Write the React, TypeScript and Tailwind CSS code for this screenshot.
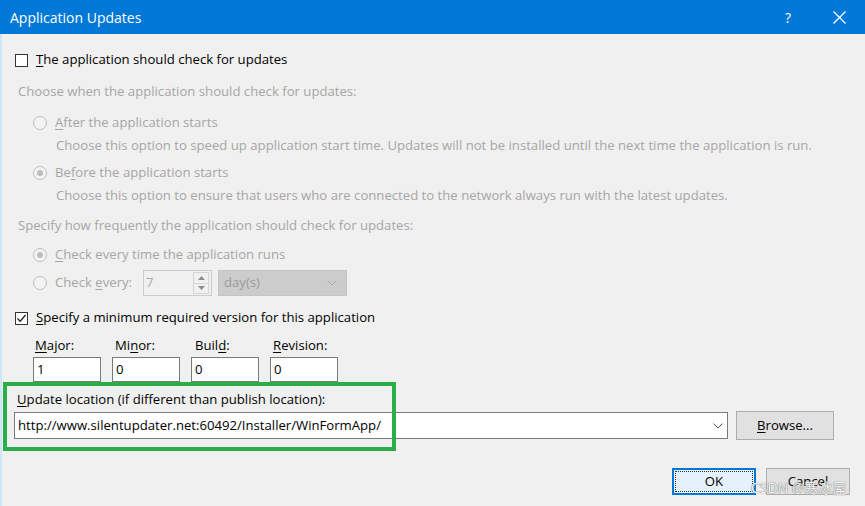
import React from "react";

const F = { fontFamily: '"Open Sans", "Noto Sans", "Noto Sans CJK SC", sans-serif' };

function Check({ checked }: { checked?: boolean }) {
  return (
    <div className="w-[13px] h-[13px] border border-[#333333] bg-white flex items-center justify-center shrink-0">
      {checked && (
        <svg width="11" height="11" viewBox="0 0 11 11">
          <path d="M1.5 5.5 L4.2 8.2 L9.5 2" fill="none" stroke="#222" strokeWidth="1.3" />
        </svg>
      )}
    </div>
  );
}

function Radio({ checked }: { checked?: boolean }) {
  return (
    <div className="w-[14px] h-[14px] rounded-full border border-[#bcbcbc] bg-[#f4f4f4] flex items-center justify-center shrink-0">
      {checked && <div className="w-[6px] h-[6px] rounded-full bg-[#bcbcbc]" />}
    </div>
  );
}

function U({ children }: { children: React.ReactNode }) {
  return <span className="underline underline-offset-2">{children}</span>;
}

export default function App() {
  return (
    <div className="w-[865px] h-[506px] overflow-hidden relative bg-[#f0f0f0] text-[13.15px] text-black" style={F}>
      {/* title bar */}
      <div className="h-[34px] bg-[#0078d7] flex items-center text-white">
        <div className="pl-[10px] text-[14px] flex-1">Application Updates</div>
        <div className="w-[30px] text-center text-[14px] mr-[21px]">?</div>
        <div className="w-[30px] flex justify-center mr-[11px]">
          <svg width="13" height="13" viewBox="0 0 13 13">
            <path d="M0.5 0.5 L12.5 12.5 M12.5 0.5 L0.5 12.5" stroke="white" strokeWidth="1.3" />
          </svg>
        </div>
      </div>

      <div className="flex h-[472px]">
        <div className="w-[2px] bg-[#cfe6fa]" />
        <div className="flex-1 flex flex-col pt-[16px] pl-[13px]">
          <div className="h-[20px] flex items-center gap-[8px]">
            <Check />
            <span><U>T</U>he application should check for updates</span>
          </div>
          <div className="h-[20px] mt-[12px] flex items-center pl-[3px] text-[#a6a6a6]">
            Choose when the application should check for updates:
          </div>
          <div className="h-[20px] mt-[11px] flex items-center gap-[8px] pl-[18px] text-[#a6a6a6]">
            <Radio />
            <span><U>A</U>fter the application starts</span>
          </div>
          <div className="h-[20px] mt-[3px] flex items-center pl-[41px] text-[#a6a6a6]">
            Choose this option to speed up application start time. Updates will not be installed until the next time the application is run.
          </div>
          <div className="h-[20px] mt-[7px] flex items-center gap-[8px] pl-[18px] text-[#a6a6a6]">
            <Radio checked />
            <span>Be<U>f</U>ore the application starts</span>
          </div>
          <div className="h-[20px] mt-[3px] flex items-center pl-[41px] text-[#a6a6a6]">
            Choose this option to ensure that users who are connected to the network always run with the latest updates.
          </div>
          <div className="h-[20px] mt-[10px] flex items-center pl-[3px] text-[#a6a6a6]">
            Specify how frequently the application should check for updates:
          </div>
          <div className="h-[20px] mt-[9px] flex items-center gap-[8px] pl-[18px] text-[#a6a6a6]">
            <Radio checked />
            <span><U>C</U>heck every time the application runs</span>
          </div>
          <div className="h-[26px] mt-[5px] flex items-center pl-[18px] text-[#a6a6a6]">
            <Radio />
            <span className="ml-[8px] w-[88px]">Check <U>e</U>very:</span>
            <div className="w-[69px] h-[26px] border border-[#cccccc] bg-[#f0f0f0] flex items-center">
              <span className="pl-[2px] flex-1">7</span>
              <div className="w-[16px] h-[22px] flex flex-col mr-[2px] border border-[#d6d6d6]">
                <div className="flex-1 flex items-center justify-center">
                  <svg width="7" height="4" viewBox="0 0 7 4"><path d="M0 4 L3.5 0 L7 4Z" fill="#8a8a8a" /></svg>
                </div>
                <div className="h-px bg-[#d6d6d6]" />
                <div className="flex-1 flex items-center justify-center">
                  <svg width="7" height="4" viewBox="0 0 7 4"><path d="M0 0 L3.5 4 L7 0Z" fill="#8a8a8a" /></svg>
                </div>
              </div>
            </div>
            <div className="ml-[6px] w-[129px] h-[26px] bg-[#cccccc] border border-[#c4c4c4] flex items-center">
              <span className="pl-[5px] flex-1 text-[#9a9a9a]">day(s)</span>
              <svg className="mr-[9px]" width="10" height="6" viewBox="0 0 10 6"><path d="M0.5 0.5 L5 5 L9.5 0.5" fill="none" stroke="#a8a8a8" /></svg>
            </div>
          </div>
          <div className="h-[20px] mt-[12px] flex items-center gap-[8px]">
            <Check checked />
            <span><U>S</U>pecify a minimum required version for this application</span>
          </div>
          <div className="h-[20px] mt-[8px] flex items-center pl-[20px]">
            <span className="w-[80px]"><U>M</U>ajor:</span>
            <span className="w-[80px]">Mi<U>n</U>or:</span>
            <span className="w-[78px]">Buil<U>d</U>:</span>
            <span><U>R</U>evision:</span>
          </div>
          <div className="h-[25px] mt-[1px] flex pl-[18px] gap-[11px]">
            {["1", "0", "0", "0"].map((v, i) => (
              <div key={i} className="w-[68px] h-[25px] bg-white border border-[#7a7a7a] flex items-center pl-[3px]">
                {v}
              </div>
            ))}
          </div>
          <div className="h-[20px] mt-[8px] flex items-center pl-[2px]">
            <span><U>U</U>pdate location (if different than publish location):</span>
          </div>
          <div className="mt-px flex items-center">
            <div className="w-[714px] h-[27px] bg-white border border-[#7a7a7a] flex items-center ml-[-1px]">
              <span className="pl-[3px] flex-1">http://www.silentupdater.net:60492/Installer/WinFormApp/</span>
              <svg className="mr-[4px]" width="10" height="6" viewBox="0 0 10 6"><path d="M0.5 0.5 L5 5 L9.5 0.5" fill="none" stroke="#555" /></svg>
            </div>
            <div className="ml-[8px] w-[98px] h-[29px] bg-[#e1e1e1] border border-[#adadad] flex items-center justify-center">
              <span><U>B</U>rowse...</span>
            </div>
          </div>
          <div className="mt-[28px] flex justify-end pr-[15px] gap-[10px]">
            <div className="w-[84px] h-[27px] bg-[#e5f1fb] border-2 border-[#0078d7] flex items-center justify-center">
              <div className="w-[78px] h-[21px] border border-dotted border-[#333] flex items-center justify-center">OK</div>
            </div>
            <div className="w-[84px] h-[27px] bg-[#e1e1e1] border border-[#adadad] flex items-center justify-center">
              Cancel
            </div>
          </div>
        </div>
      </div>

      {/* annotation highlight */}
      <div className="absolute left-[3px] top-[382px] w-[393px] h-[69px] border-[4px] border-[#2aae4a] pointer-events-none" />
      {/* watermark */}
      <div className="absolute left-[751px] top-[477px] text-[14px] text-[#f4f4f4] [text-shadow:0_0_1px_#777,0_0_1px_#777]">
        CSDN @寒冰屋
      </div>
    </div>
  );
}
